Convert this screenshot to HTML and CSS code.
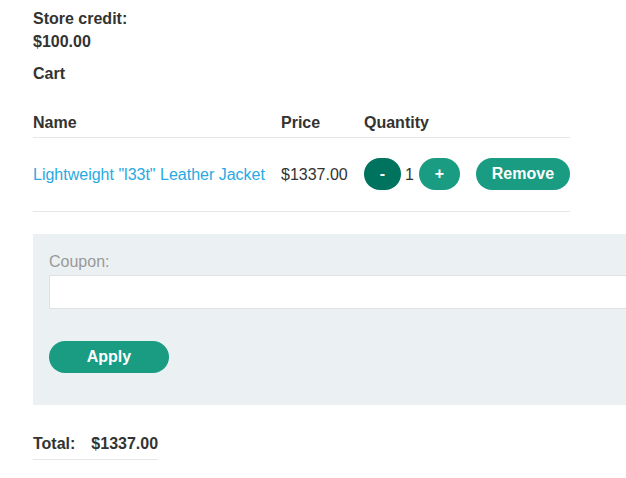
FILE: index.html
```html
<!DOCTYPE html>
<html>
<head>
<meta charset="utf-8">
<link rel="stylesheet" href="styles.css">
</head>
<body>
<div class="page">
  <p class="credit">Store credit:<br>$100.00</p>
  <p class="cart-title">Cart</p>
  <table class="cart">
    <thead>
      <tr><th class="c-name">Name</th><th class="c-price">Price</th><th class="c-qty">Quantity</th></tr>
    </thead>
    <tbody>
      <tr>
        <td><a class="item-link" href="#">Lightweight "l33t" Leather Jacket</a></td>
        <td>$1337.00</td>
        <td>
          <div class="qty">
            <button class="btn btn-round btn-dark">-</button>
            <span class="qty-num">1</span>
            <button class="btn btn-round btn-plus">+</button>
            <button class="btn btn-remove">Remove</button>
          </div>
        </td>
      </tr>
    </tbody>
  </table>
  <form class="coupon">
    <label class="coupon-label">Coupon:</label>
    <input class="coupon-input" type="text">
    <button class="btn btn-apply" type="button">Apply</button>
  </form>
  <table class="total">
    <tr><th>Total:</th><th>$1337.00</th></tr>
  </table>
</div>
</body>
</html>
```
FILE: styles.css
```css
html, body {
  margin: 0;
  padding: 0;
  background: #fff;
}
body {
  font-family: "Liberation Sans", Arial, sans-serif;
  font-size: 16px;
  color: #333332;
  overflow: hidden;
}
.page {
  padding: 7px 0 0 33px;
  overflow: hidden;
}
.credit {
  margin: 0;
  font-weight: bold;
  line-height: 23px;
}
.cart-title {
  margin: 9px 0 0;
  font-weight: bold;
  line-height: 23px;
}
.cart {
  margin-top: 24px;
  border-collapse: collapse;
  width: 537px;
}
.cart th {
  text-align: left;
  font-weight: bold;
  line-height: 23px;
  padding: 2px 0 3px;
  border-bottom: 1px solid #e6e6e6;
}
.c-name { width: 248px; }
.c-price { width: 83px; }
.cart td {
  padding: 20px 0 21px;
  line-height: 23px;
  vertical-align: middle;
  border-bottom: 1px solid #e6e6e6;
  white-space: nowrap;
}
.item-link {
  color: #29a9e1;
  text-decoration: none;
}
.qty {
  display: flex;
  align-items: center;
}
.qty-num {
  margin: 0 5px 0 4px;
}
.btn {
  border: none;
  font-family: "Liberation Sans", Arial, sans-serif;
  font-weight: bold;
  font-size: 16px;
  color: #fff;
  background: #199c82;
  height: 32px;
  border-radius: 16px;
  padding: 0;
  cursor: pointer;
}
.btn-dark {
  background: #00735e;
  width: 37px;
}
.btn-plus {
  width: 41px;
}
.btn-remove {
  width: 94px;
  margin-left: 16px;
}
.coupon {
  margin-top: 22px;
  width: 640px;
  background: #ebf0f2;
  padding: 16px 0 32px 16px;
  display: flex;
  flex-direction: column;
  align-items: flex-start;
}
.coupon-label {
  color: #999;
  line-height: 23px;
  margin-bottom: 2px;
}
.coupon-input {
  box-sizing: border-box;
  width: 640px;
  height: 34px;
  border: 1px solid #e0e0e0;
  background: #fff;
  margin: 0 0 32px;
}
.btn-apply {
  width: 120px;
}
.total {
  margin-top: 27px;
  border-collapse: collapse;
}
.total th {
  text-align: left;
  font-weight: bold;
  line-height: 23px;
  padding: 0 0 4px;
  border-bottom: 1px solid #e6e6e6;
}
.total th:first-child {
  padding-right: 16px;
}
```
